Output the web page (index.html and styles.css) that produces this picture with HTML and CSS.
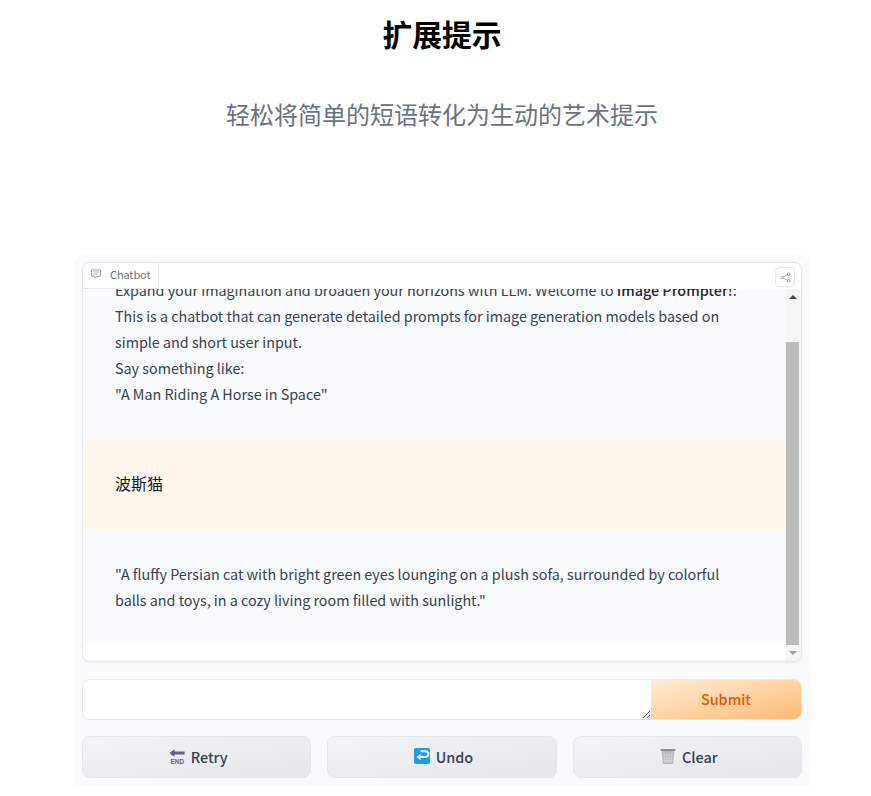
FILE: index.html
```html
<!DOCTYPE html>
<html>

<head>
    <meta charset="utf-8">
    <link rel="stylesheet" href="styles.css">
</head>

<body>
    <div class="page">
        <h1 class="title">扩展提示</h1>
        <h3 class="subtitle">轻松将简单的短语转化为生动的艺术提示</h3>
        <div class="panel">
            <div class="chatbot">
                <div class="chat-top">
                    <div class="chat-label">
                        <svg class="label-icon" viewBox="0 0 16 16" width="12" height="12">
                            <path d="M2 2.5h12v8.5H8.5L6 13.5V11H2z" fill="none" stroke="#9ca3af" stroke-width="1.2" />
                            <path d="M4.5 5.3h7M4.5 8h5" stroke="#9ca3af" stroke-width="1.1" />
                        </svg>
                        Chatbot
                    </div>
                    <button class="share-btn">
                        <svg viewBox="0 0 16 16" width="11" height="11">
                            <circle cx="12.5" cy="3" r="2" fill="none" stroke="#8b919b" stroke-width="1.1" />
                            <circle cx="3.2" cy="8" r="2" fill="none" stroke="#8b919b" stroke-width="1.1" />
                            <circle cx="12.5" cy="13" r="2" fill="none" stroke="#8b919b" stroke-width="1.1" />
                            <path d="M5 7l5.8-3.1M5 9l5.8 3.1" stroke="#8b919b" stroke-width="1.1" />
                        </svg>
                    </button>
                </div>
                <div class="chat-body">
                    <div class="messages">
                        <div class="msg bot first">
                            Expand your imagination and broaden your horizons with LLM. Welcome to <strong>Image Prompter!</strong>:<br>
                            This is a chatbot that can generate detailed prompts for image generation models based on<br>
                            simple and short user input.<br>
                            Say something like:<br>
                            "A Man Riding A Horse in Space"
                        </div>
                        <div class="msg user">波斯猫</div>
                        <div class="msg bot last">
                            "A fluffy Persian cat with bright green eyes lounging on a plush sofa, surrounded by colorful<br>
                            balls and toys, in a cozy living room filled with sunlight."
                        </div>
                    </div>
                    <div class="scrollbar">
                        <div class="arrow arrow-up"></div>
                        <div class="track-gap"></div>
                        <div class="thumb"></div>
                        <div class="arrow arrow-down"></div>
                    </div>
                </div>
            </div>
            <div class="input-row">
                <div class="input-wrap"><textarea class="input-box"></textarea></div>
                <button class="submit-btn">Submit</button>
            </div>
            <div class="btn-row">
                <button class="btn">
                    <svg viewBox="0 0 16 16" width="16" height="16">
                        <path d="M0.5 5L5.5 1.2V3.6H15.6V6.6H5.5V9z" fill="#5b5e8f" />
                        <text x="1.5" y="15.6" class="end-text">END</text>
                    </svg>
                    Retry
                </button>
                <button class="btn">
                    <svg viewBox="0 0 16 16" width="16" height="16">
                        <rect width="16" height="16" rx="2" fill="#1d9bf0" />
                        <path d="M6.5 3.2H11.5a2.8 2.8 0 0 1 0 5.8H5" fill="none" stroke="#fff" stroke-width="1.9" />
                        <path d="M2.5 9L6.5 5.8V12.2z" fill="#fff" />
                    </svg>
                    Undo
                </button>
                <button class="btn">
                    <svg viewBox="0 0 16 16" width="16" height="16">
                        <path d="M0.5 1H15.5V3H0.5z" fill="#8f8f8f" />
                        <path d="M1.5 3H14.5L13 16H3z" fill="#b5b5b5" />
                        <path d="M4 4l1.2 11M6.7 4l.4 11M9.3 4l-.4 11M12 4l-1.2 11M2 7h12M2.5 10h11M3 13h10" stroke="#e4e4e4" stroke-width=".6" />
                    </svg>
                    Clear
                </button>
            </div>
        </div>
    </div>
</body>

</html>
```

FILE: styles.css
```css
* {
    box-sizing: border-box;
}

body {
    margin: 0;
    background-color: #fff;
    font-family: "Noto Sans CJK SC", "Noto Sans", sans-serif;
    overflow: hidden;
}

.page {
    width: 736px;
    margin-left: 74px;
}

.title {
    margin: 0;
    padding-top: 13px;
    height: 98px;
    font-size: 29.8px;
    line-height: 40px;
    font-weight: 700;
    text-align: center;
    color: #000;
}

.subtitle {
    margin: 0;
    height: 156px;
    font-size: 24px;
    line-height: 32px;
    font-weight: 400;
    text-align: center;
    color: #6b7280;
}

.panel {
    height: 531px;
    padding: 8px;
    background-color: #f9fafb;
    border-radius: 12px 12px 0 0;
}

.chatbot {
    height: 400px;
    background-color: #fff;
    border: 1px solid #e5e7eb;
    border-radius: 8px;
    overflow: hidden;
    box-shadow: 0 1px 2px rgba(0, 0, 0, 0.05);
}

.chat-top {
    height: 26px;
    display: flex;
    justify-content: space-between;
    align-items: flex-start;
}

.chat-label {
    width: 76px;
    height: 26px;
    display: flex;
    align-items: center;
    gap: 8px;
    padding: 0 0 3px 7px;
    font-size: 10.8px;
    color: #6b7280;
    background-color: #fff;
    border-right: 1px solid #e5e7eb;
    border-bottom: 1px solid #e5e7eb;
    border-radius: 0 0 4px 0;
}

.label-icon {
    flex: none;
}

.share-btn {
    width: 20px;
    height: 20px;
    margin: 4px 6px 0 0;
    padding: 0;
    display: flex;
    align-items: center;
    justify-content: center;
    background-color: #fff;
    border: 1px solid #e5e7eb;
    border-radius: 4px;
}

.chat-body {
    height: 372px;
    display: flex;
    overflow: hidden;
}

.messages {
    flex: 1;
    height: 372px;
    overflow: hidden;
    font-size: 14.33px;
    line-height: 26px;
    color: #374151;
}

.msg {
    padding: 32px;
}

.bot {
    background-color: #f9fafb;
}

/* scrolled a little: the first line is cut off by the header */
.first {
    height: 163px;
    margin-top: -12px;
    padding-top: 0;
    padding-bottom: 0;
}

.first strong {
    font-weight: 500;
    color: #1f2937;
}

.user {
    height: 89px;
    padding-top: 30px;
    font-size: 16px;
    background-color: #fff7ed;
    color: #111827;
}

.last {
    height: 116px;
}

.scrollbar {
    width: 16px;
    height: 372px;
    flex: none;
    display: flex;
    flex-direction: column;
    align-items: center;
    background-color: #f6f6f6;
}

.arrow {
    width: 0;
    height: 0;
    flex: none;
    border-left: 4px solid transparent;
    border-right: 4px solid transparent;
}

.arrow-up {
    margin: 6px 0 0;
    border-bottom: 4px solid #444;
}

.arrow-down {
    margin: 6px 0 6px;
    border-top: 4px solid #a3a3a3;
}

.track-gap {
    flex: 1;
}

.thumb {
    width: 13px;
    height: 303px;
    flex: none;
    align-self: flex-start;
    margin-left: 1px;
    background-color: #bcbcbc;
}

.input-row {
    display: flex;
    height: 41px;
    margin-top: 17px;
    border: 1px solid #e5e7eb;
    border-radius: 8px;
    overflow: hidden;
}

.input-wrap {
    flex: 1;
    background-color: #fff;
}

.input-box {
    display: block;
    width: 100%;
    height: 100%;
    border: 0;
    outline: 0;
    background-color: #fff;
}

.submit-btn {
    width: 150px;
    padding: 0 0 2px;
    border: 0;
    font-family: inherit;
    font-size: 14.4px;
    font-weight: 500;
    color: #ea580c;
    background: linear-gradient(to bottom right, #ffedd5, #fdba74);
}

.btn-row {
    display: flex;
    gap: 16px;
    margin-top: 16px;
}

.btn {
    flex: 1;
    height: 42px;
    display: flex;
    align-items: center;
    justify-content: center;
    gap: 6px;
    padding: 0 0 2px 3px;
    border: 1px solid #e5e7eb;
    border-radius: 8px;
    font-family: inherit;
    font-size: 14.4px;
    font-weight: 500;
    color: #374151;
    background: linear-gradient(to bottom right, #f3f4f6, #e5e7eb);
}

.end-text {
    font-size: 6.4px;
    font-weight: 700;
    fill: #5b5e8f;
    font-family: "Liberation Sans", sans-serif;
}
```
